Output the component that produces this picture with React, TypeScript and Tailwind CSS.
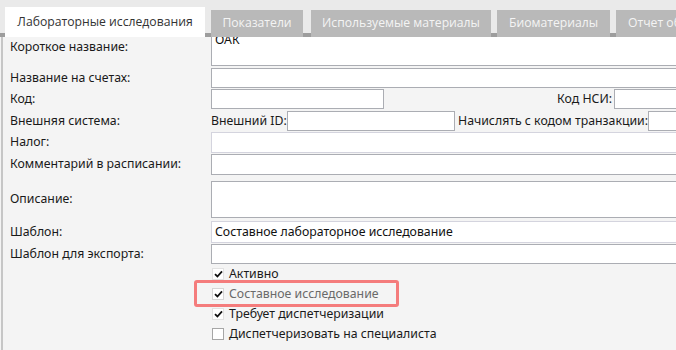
const labelFont = "font-['Segoe_UI','Noto_Sans',sans-serif]"
const tabFont = "font-['Open_Sans','Noto_Sans',sans-serif]"

function Tab({ label, active, width }: { label: string; active?: boolean; width: string }) {
	if (active) {
		return (
			<div className={`${width} flex h-[30px] shrink-0 items-center justify-center whitespace-nowrap bg-white text-[12.2px] text-[#333] ${tabFont}`}>
				{label}
			</div>
		)
	}
	return (
		<div
			className={`${width} flex h-[27px] shrink-0 items-center justify-center overflow-hidden whitespace-nowrap bg-[#b9b9b9] text-[12.2px] text-[#f4f4f4] ${tabFont}`}
		>
			{label}
		</div>
	)
}

function Input({ className = "", faded, children }: { className?: string; faded?: boolean; children?: React.ReactNode }) {
	return (
		<div
			className={`h-full border bg-white px-[3px] leading-[20px] text-[#111] ${faded ? "border-[#d4d4de]" : "border-[#abadb3]"} ${className}`}
		>
			{children}
		</div>
	)
}

function Row({ label, height, mb, children }: { label: string; height: string; mb: string; children: React.ReactNode }) {
	return (
		<div className={`flex items-center ${height} ${mb}`}>
			<div className="w-[211px] shrink-0 pl-[10px] whitespace-nowrap">{label}</div>
			<div className="flex h-full flex-1 items-center">{children}</div>
		</div>
	)
}

function Check({ checked, disabled }: { checked?: boolean; disabled?: boolean }) {
	return (
		<div
			className={`flex h-[12px] w-[12px] shrink-0 items-center justify-center border bg-white ${disabled ? "border-[#d6d6d6]" : checked ? "border-[#e2e2e2]" : "border-[#a6a6a6]"}`}
		>
			{checked && (
				<svg width="9" height="8" viewBox="0 0 9 8">
					<path d="M1 4.2 L3.4 6.5 L8 1.3" fill="none" stroke="#111" strokeWidth="1.8" />
				</svg>
			)}
		</div>
	)
}

function CheckRow({ label, checked, disabled, highlight }: { label: string; checked?: boolean; disabled?: boolean; highlight?: boolean }) {
	return (
		<div className="relative flex h-[20px] items-center pl-[212px]">
			<Check checked={checked} disabled={disabled} />
			<span className={`ml-[5px] whitespace-nowrap ${disabled ? "text-[#6a6a6a]" : ""}`}>{label}</span>
			{highlight && (
				<div className="absolute top-[-4px] left-[194px] h-[27px] w-[205px] rounded-[3px] border-[3px] border-[#f47c7c]" />
			)}
		</div>
	)
}

export default function App() {
	return (
		<div className={`h-[350px] w-[676px] overflow-hidden bg-[#f4f4f4] text-[12.3px] text-[#1a1a1a] ${labelFont}`}>
			{/* tab strip */}
			<div className="relative z-10 flex h-[37px] items-end bg-[#eaeaea]">
				<div className="absolute right-0 bottom-0 left-0 h-[4px] bg-[#9d9d9d]" />
				<div className="relative flex items-end pl-[5px]">
					<Tab label="Лабораторные исследования" active width="w-[200px]" />
					<div className="w-[6px] shrink-0" />
					<Tab label="Показатели" width="w-[92px]" />
					<div className="w-[8px] shrink-0" />
					<Tab label="Используемые материалы" width="w-[180px]" />
					<div className="w-[6px] shrink-0" />
					<Tab label="Биоматериалы" width="w-[113px]" />
					<div className="w-[6px] shrink-0" />
					<div className="flex h-[27px] w-[80px] shrink-0 items-center overflow-hidden whitespace-nowrap bg-[#b9b9b9] pl-[12px] text-[12.2px] text-[#f4f4f4]">
						<span className={tabFont}>Отчет об исследовании</span>
					</div>
				</div>
			</div>

			{/* form */}
			<div className="ml-[1px] h-[313px] overflow-hidden border-l-2 border-[#c6c6c6]">
				<div className="-mt-[8px] -ml-[3px] w-[720px]">
					<Row label="Короткое название:" height="h-[37px]" mb="mb-[2px]">
						<Input className="w-full leading-[18px]">ОАК</Input>
					</Row>
					<Row label="Название на счетах:" height="h-[20px]" mb="mb-[1px]">
						<Input className="w-full" />
					</Row>
					<Row label="Код:" height="h-[20px]" mb="mb-[2px]">
						<Input className="w-[173px] shrink-0" />
						<div className="w-[230px] shrink-0 pr-[2px] text-right">Код НСИ:</div>
						<Input className="flex-1" />
					</Row>
					<Row label="Внешняя система:" height="h-[20px]" mb="mb-[1px]">
						<span className="w-[76px] shrink-0 whitespace-nowrap">Внешний ID:</span>
						<Input className="w-[168px] shrink-0" />
						<span className="w-[193px] shrink-0 whitespace-nowrap pl-[3px]">Начислять с кодом транзакции:</span>
						<Input className="flex-1" />
					</Row>
					<Row label="Налог:" height="h-[21px]" mb="mb-[1px]">
						<Input faded className="w-full" />
					</Row>
					<Row label="Комментарий в расписании:" height="h-[21px]" mb="mb-[6px]">
						<Input className="w-full" />
					</Row>
					<Row label="Описание:" height="h-[37px]" mb="mb-[3px]">
						<Input className="w-full" />
					</Row>
					<Row label="Шаблон:" height="h-[22px]" mb="mb-[1px]">
						<Input faded className="w-full">
							Составное лабораторное исследование
						</Input>
					</Row>
					<Row label="Шаблон для экспорта:" height="h-[20px]" mb="mb-0">
						<Input className="w-full" />
					</Row>
					<CheckRow label="Активно" checked />
					<CheckRow label="Составное исследование" checked disabled highlight />
					<CheckRow label="Требует диспетчеризации" checked />
					<CheckRow label="Диспетчеризовать на специалиста" />
					<div className="mt-[5px] pl-[10px]">Категория:</div>
				</div>
			</div>
		</div>
	)
}
